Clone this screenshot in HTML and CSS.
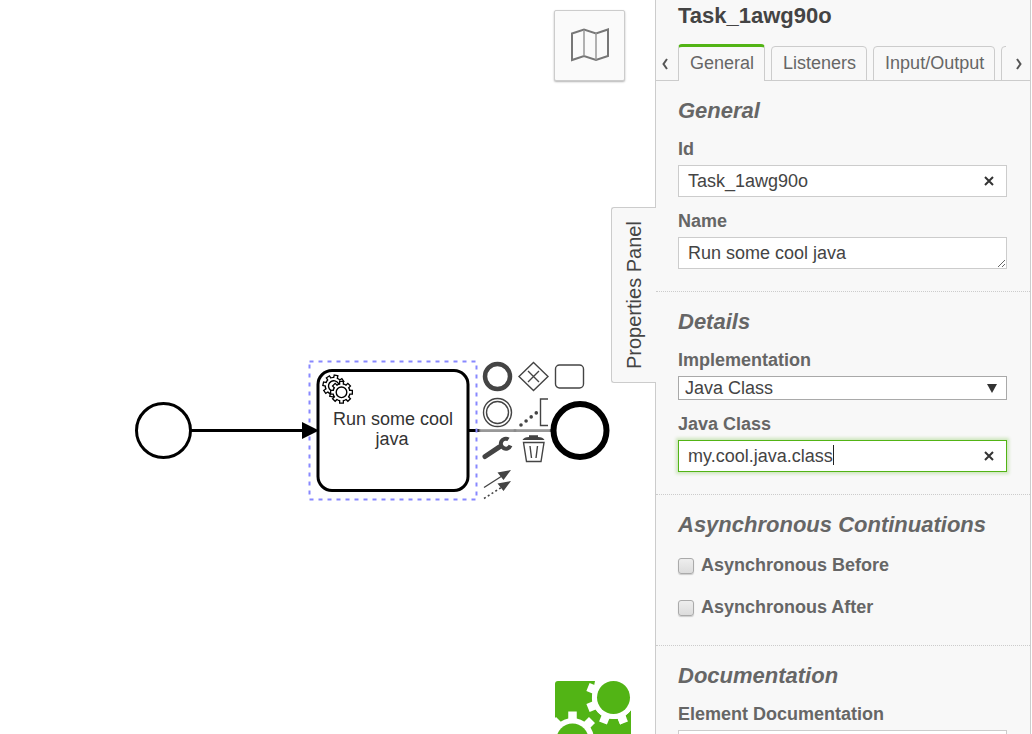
FILE: index.html
```html
<!DOCTYPE html>
<html lang="en">
<head>
<meta charset="utf-8">
<title>Process Modeler</title>
<link rel="stylesheet" href="styles.css">
</head>
<body>
<div class="modeler">
  <main class="canvas">
    <svg class="diagram" width="640" height="520" viewBox="0 0 640 520" role="img" aria-label="Process diagram">
      <defs>
        <g id="gear">
          <circle r="9.200" fill="#000"/>
          <path d="M0-11.500V11.500M-11.500 0H11.500M-8.100-8.100L8.100 8.100M8.100-8.100L-8.100 8.100" stroke="#000" stroke-width="5"/>
          <circle r="7.900" fill="#fff"/>
          <path d="M0-10.200V10.200M-10.200 0H10.200M-7.200-7.200L7.200 7.200M7.200-7.200L-7.200 7.200" stroke="#fff" stroke-width="2.400"/>
          <circle r="5.300" fill="#fff" stroke="#000" stroke-width="1.400"/>
        </g>
      </defs>
      <circle cx="163.500" cy="430.500" r="27" class="event"/>
      <path d="M191 430.500H306" class="flow"/>
      <path d="M469 430.500H553" class="flow"/>
      <rect x="318" y="370.500" width="150" height="120" rx="14" class="task"/>
      <rect x="309.500" y="361.500" width="167" height="138" class="selection"/>
      <path d="M302 422L319 430.500L302 439Z"/>
      <use href="#gear" transform="translate(333.800 386) rotate(12)"/>
      <use href="#gear" transform="translate(341.500 392.300)"/>
      <text class="task-label" x="393" y="425">Run some cool</text>
      <text class="task-label" x="392" y="445">java</text>
    </svg>

    <div class="context-pad">
      <button class="pad-entry" aria-label="Append end event"><svg viewBox="0 0 30 30"><circle cx="15.500" cy="14.500" r="12.500" fill="none" stroke="#444" stroke-width="4.500"/></svg></button>
      <button class="pad-entry" aria-label="Append gateway"><svg viewBox="0 0 30 30"><path class="thin" d="M15.500 .5L30 14.500L15.500 28.500L1 14.500ZM10 9L21 20M21 9L10 20"/></svg></button>
      <button class="pad-entry" aria-label="Append task"><svg viewBox="0 0 30 30"><rect class="thin" x="1.500" y="3" width="28" height="23" rx="4"/></svg></button>
      <button class="pad-entry" aria-label="Append intermediate event"><svg viewBox="0 0 30 30"><circle class="thin" cx="15.500" cy="14.500" r="14"/><circle class="thin" cx="15.500" cy="14.500" r="11"/></svg></button>
      <button class="pad-entry" aria-label="Append text annotation"><svg viewBox="0 0 30 30"><path class="thin" d="M30 1H22.500V27.500H30"/><path d="M3 27L18.500 14.700" fill="none" stroke="#444" stroke-width="3.600" stroke-linecap="round" stroke-dasharray="0 6.500"/></svg></button>
      <button class="pad-entry row-start" aria-label="Change type"><svg viewBox="0 0 30 30"><path d="M3 22.500L17.500 12.800" stroke="#444" stroke-width="5" stroke-linecap="round"/><path d="M26.500 5.400A5 5 0 1 0 28.500 11.500" fill="none" stroke="#444" stroke-width="4"/></svg></button>
      <button class="pad-entry" aria-label="Remove"><svg viewBox="0 0 30 30"><path fill="#444" d="M4.500 6Q6 3 11 3V1.200H20V3Q25 3 26.500 6Z"/><path class="thin" d="M5.500 8.500H26L23 27.500H8.500ZM12 12L13.500 24M19.500 12L18 24"/></svg></button>
      <button class="pad-entry row-start" aria-label="Connect"><svg viewBox="0 0 30 30"><path class="thin" d="M2 17.500L20 6"/><path d="M2 28.500L20 17" fill="none" stroke="#444" stroke-width="1.600" stroke-dasharray="2 2.500"/><path fill="#444" d="M29 0L15.500 2.500L21.500 10ZM29 11L15.500 13.500L21.500 21Z"/></svg></button>
    </div>

    <svg class="end-event" width="60" height="60" viewBox="0 0 60 60" role="img" aria-label="End event"><circle cx="30" cy="30.500" r="26.500"/></svg>

    <button class="map-toggle" aria-label="Toggle minimap"><svg width="44" height="40" viewBox="0 0 44 40"><path d="M7 8.500L19 4.500L31 8.500L43 4.500V31L31 35L19 31L7 35Z" fill="none" stroke="#777" stroke-width="2"/><path d="M19 5V31M31 8V35" stroke="#999" stroke-width="1.500"/></svg></button>

    <svg class="logo" width="76" height="53" viewBox="0 0 76 53" role="img" aria-label="Camunda">
      <rect y="0" width="76" height="76" rx="3" fill="#52b415"/>
      <g stroke="#fff" stroke-width="8.500" fill="#fff">
        <path d="M58.500 16.500L33 6M58.500 16.500L33 27M58.500 16.500L48 42M58.500 16.500L69 42M17.500 58.500V30.500M17.500 58.500L-2 39M17.500 58.500L37 39"/>
      </g>
      <path d="M40 0H76V29A21.500 21.500 0 0 1 38 10Z" fill="#fff"/>
      <path d="M76 30V53H60Z" fill="#52b415"/>
      <circle cx="58.500" cy="16.500" r="21.500" fill="#fff"/>
      <path d="M58.500 16.500L69 42" stroke="#fff" stroke-width="8.500"/>
      <circle cx="58.500" cy="16.500" r="16.500" fill="#52b415"/>
      <circle cx="17.500" cy="58.500" r="21.500" fill="#fff"/>
      <circle cx="17.500" cy="58.500" r="16" fill="#52b415"/>
    </svg>
  </main>

  <aside class="panel">
    <button class="panel-toggle">Properties Panel</button>
    <h1 class="panel-title">Task_1awg90o</h1>
    <nav class="tabs">
      <button class="tab-scroll" aria-label="Previous tabs"><svg viewBox="0 0 6 12"><path d="M5 1L1.500 6L5 11"/></svg></button>
      <div class="tab-list">
        <a class="tab active" href="#general">General</a>
        <a class="tab" href="#listeners">Listeners</a>
        <a class="tab" href="#io">Input/Output</a>
        <a class="tab" href="#extensions" aria-label="More"></a>
      </div>
      <button class="tab-scroll next" aria-label="Next tabs"><svg viewBox="0 0 6 12"><path d="M1 1L4.500 6L1 11"/></svg></button>
    </nav>

    <section class="group">
      <h2>General</h2>
      <div class="field">
        <label for="id">Id</label>
        <div class="control"><input id="id" type="text" value="Task_1awg90o"><button class="clear" aria-label="Clear id"><svg viewBox="0 0 10 10"><path d="M1 1L9 9M9 1L1 9"/></svg></button></div>
      </div>
      <div class="field">
        <label for="name">Name</label>
        <textarea id="name" rows="1">Run some cool java</textarea>
      </div>
    </section>

    <section class="group">
      <h2>Details</h2>
      <div class="field">
        <label for="impl">Implementation</label>
        <div class="control"><select id="impl"><option>Java Class</option></select><svg class="arrow" viewBox="0 0 10 9"><path d="M0 0H10L5 9Z"/></svg></div>
      </div>
      <div class="field">
        <label for="class">Java Class</label>
        <div class="control"><input id="class" class="focused" type="text" value="my.cool.java.class"><span class="caret"></span><button class="clear" aria-label="Clear class"><svg viewBox="0 0 10 10"><path d="M1 1L9 9M9 1L1 9"/></svg></button></div>
      </div>
    </section>

    <section class="group checks">
      <h2>Asynchronous Continuations</h2>
      <div class="check"><input id="before" type="checkbox"><label for="before">Asynchronous Before</label></div>
      <div class="check"><input id="after" type="checkbox"><label for="after">Asynchronous After</label></div>
    </section>

    <section class="group">
      <h2>Documentation</h2>
      <div class="field">
        <label for="doc">Element Documentation</label>
        <textarea id="doc" rows="1"></textarea>
      </div>
    </section>
  </aside>
</div>
</body>
</html>
```

FILE: styles.css
```css
* { box-sizing: border-box; }

body {
  margin: 0;
  font-family: "Liberation Sans", Arial, sans-serif;
  font-size: 18px;
  color: #444;
  background: #fff;
}

button, input, select, textarea { font: inherit; color: inherit; }
button { padding: 0; cursor: pointer; }

.modeler {
  display: flex;
  height: 100vh;
  padding-right: 1px;
  overflow: hidden;
}

/* Diagram canvas */
.canvas { position: relative; flex: 1; min-width: 0; overflow: hidden; }
.diagram { position: absolute; top: 0; left: 0; }
.event, .task { fill: #fff; stroke: #000; stroke-width: 3; }
.flow { stroke: #000; stroke-width: 3; }
.selection { fill: none; stroke: #8888ff; stroke-width: 2; stroke-dasharray: 4 5; }
.task-label { font-size: 18px; fill: #333; text-anchor: middle; }

.end-event { position: absolute; top: 400px; left: 550px; fill: #fff; stroke: #000; stroke-width: 6; }

.context-pad {
  position: absolute;
  top: 362px;
  left: 482px;
  display: grid;
  grid-template-columns: repeat(3, 30px);
  grid-auto-rows: 30px;
  gap: 6px;
}
.pad-entry {
  border: 0;
  background: rgba(255, 255, 255, 0.8);
  box-shadow: 0 0 2px 3px rgba(255, 255, 255, 0.7);
}
.pad-entry svg { display: block; width: 30px; height: 30px; overflow: visible; }
.row-start { grid-column: 1; }
.thin { fill: none; stroke: #444; stroke-width: 1.4; }

.map-toggle {
  position: absolute;
  top: 10px;
  right: 30px;
  width: 71px;
  height: 71px;
  border: 1px solid #ccc;
  border-radius: 2px;
  background: #fafafa;
  box-shadow: 0 1px 2px rgba(0, 0, 0, 0.3);
}
.map-toggle svg { display: block; margin: -2px 0 0 10px; }
.logo { position: absolute; right: 24px; bottom: 0; }

/* Properties panel */
.panel {
  position: relative;
  flex: 0 0 376px;
  padding-top: 3px;
  border: solid #ccc;
  border-width: 0 1px;
  background: #f8f8f8;
}
.panel-toggle {
  position: absolute;
  top: 207px;
  right: 100%;
  width: 45px;
  height: 176px;
  border: 1px solid #ccc;
  border-left: 0;
  border-radius: 0 3px 3px 0;
  background: #f8f8f8;
  font-size: 20px;
  writing-mode: vertical-rl;
  transform: rotate(180deg);
}
.panel-title {
  margin: 0 22px 15px;
  font-size: 22px;
  line-height: 26px;
}

.tabs { display: flex; height: 37px; }
.tab-scroll {
  flex: 0 0 22px;
  height: 37px;
  border: 0;
  border-bottom: 1px solid #ccc;
  background: none;
}
.tab-scroll.next { flex: 1 0 24px; }
.tab-scroll svg {
  display: block;
  width: 6px;
  height: 12px;
  margin: 3px 0 0 6px;
  fill: none;
  stroke: #555;
  stroke-width: 2;
}
.tab-scroll.next svg { margin-left: 10px; }
.tab-list {
  display: flex;
  align-items: flex-end;
  flex: 0 0 328px;
  gap: 6px;
  overflow: hidden;
  box-shadow: inset 0 -1px #ccc;
}
.tab {
  flex: none;
  height: 35px;
  padding: 0 10px 0 11px;
  border: 1px solid #ccc;
  border-radius: 4px 4px 0 0;
  color: #666;
  line-height: 33px;
  text-decoration: none;
}
.tab.active {
  height: 37px;
  border-top: 3px solid #52b415;
  border-bottom: 0;
  background: #f8f8f8;
}

.group { padding: 17px 23px 22px 22px; }
.group + .group { border-top: 1px dotted #ccc; }
.group h2 {
  margin: 0 0 15px;
  color: #666;
  font-size: 22px;
  font-style: italic;
  line-height: 26px;
}
.field + .field { margin-top: 14px; }
.field label {
  display: block;
  margin-bottom: 6px;
  line-height: 20px;
}
label { color: #666; font-weight: bold; }
.control { position: relative; }
.control input, textarea {
  display: block;
  width: 100%;
  height: 32px;
  padding: 0 30px 0 9px;
  border: 1px solid #ccc;
  border-radius: 0;
  background: #fff;
  outline: 0;
}
textarea { padding-top: 4px; line-height: 22px; overflow: hidden; resize: vertical; }
.control .focused { border-color: #52b415; box-shadow: 0 0 3px 2px rgba(82, 180, 21, 0.25); }
.caret { position: absolute; top: 5px; left: 155px; width: 1px; height: 20px; background: #222; }
.clear {
  position: absolute;
  top: 6px;
  right: 8px;
  width: 20px;
  height: 20px;
  border: 0;
  background: none;
}
.clear svg { display: block; width: 10px; height: 10px; margin: auto; stroke: #333; stroke-width: 2; }
select {
  display: block;
  width: 100%;
  height: 24px;
  padding: 0 6px;
  border: 1px solid #a9a9a9;
  border-radius: 0;
  background: #fff;
  appearance: none;
}
.arrow { position: absolute; top: 8px; right: 10px; width: 10px; height: 9px; fill: #333; pointer-events: none; }

.checks { padding-bottom: 26px; }
.check { display: flex; align-items: center; gap: 7px; height: 24px; }
.check + .check { margin-top: 18px; }
.check label { line-height: 24px; }
.check input {
  width: 16px;
  height: 16px;
  margin: 2px 0 0;
  border: 1px solid #aaa;
  border-radius: 3px;
  background: linear-gradient(#eee, #dcdcdc);
  box-shadow: 0 1px 1px #ccc;
  appearance: none;
}
```
